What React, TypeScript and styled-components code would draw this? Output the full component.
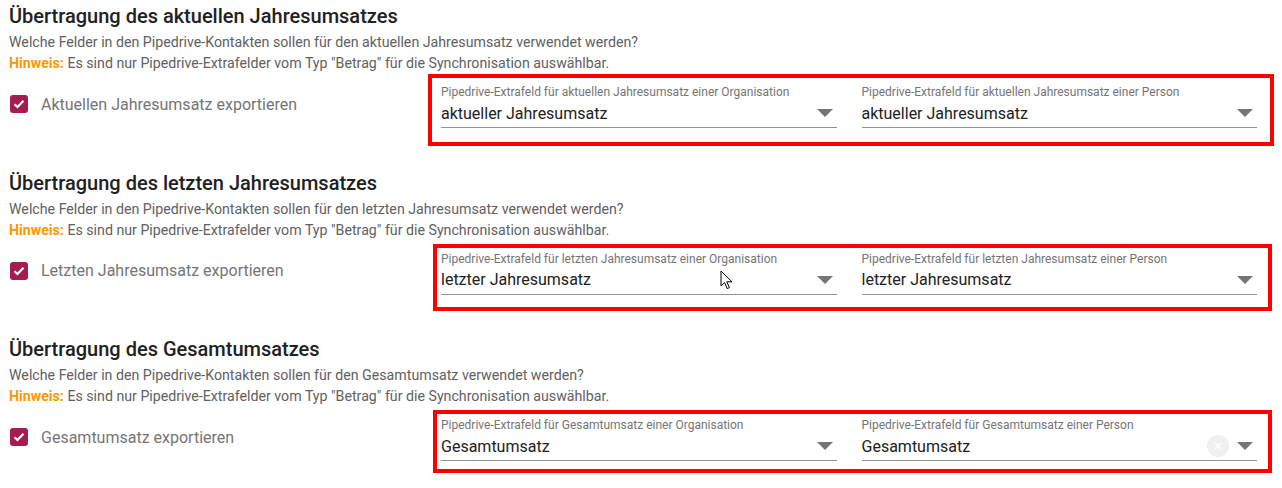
import styled, { createGlobalStyle } from 'styled-components'

const GlobalStyle = createGlobalStyle`
  body {
    margin: 0;
    background: #fff;
    font-family: Roboto, 'Noto Sans', sans-serif;
  }
`

const Page = styled.div`
  padding: 4px 25px 30px 9px;
  display: flex;
  flex-direction: column;
  gap: 42.5px;
`

const Section = styled.section`
  display: flex;
  flex-direction: column;
`

const Heading = styled.h2`
  margin: 0 0 4px;
  font-size: 20px;
  line-height: 24px;
  font-weight: 500;
  color: #212121;
`

const Hint = styled.p`
  margin: 0;
  font-size: 14.2px;
  line-height: 21px;
  color: #616161;

  b {
    color: #ff9800;
    font-weight: 700;
  }
`

const Row = styled.div`
  display: grid;
  grid-template-columns: 432px 1fr;
  margin-top: 11px;
`

const CheckLabel = styled.label`
  display: flex;
  align-items: center;
  gap: 13px;
  height: 24px;
  margin-top: 7px;
  padding-left: 1px;
  font-size: 16px;
  color: #757575;
`

const Box = styled.span`
  width: 18px;
  height: 18px;
  border-radius: 3px;
  background: #a61b50;
  display: flex;
  align-items: center;
  justify-content: center;
`

const Fields = styled.div<{ $t: number; $r: number; $b: number; $l: number }>`
  position: relative;
  display: grid;
  grid-template-columns: 1fr 1fr;
  gap: 25px;

  &::before {
    content: '';
    position: absolute;
    top: ${p => p.$t}px;
    right: ${p => p.$r}px;
    bottom: ${p => p.$b}px;
    left: ${p => p.$l}px;
    border: 4px solid #ff0000;
    pointer-events: none;
  }
`

const Field = styled.div`
  position: relative;
  display: flex;
  flex-direction: column;
`

const FieldLabel = styled.span`
  font-size: 12px;
  line-height: 14px;
  color: #757575;
`

const Select = styled.div`
  display: flex;
  align-items: center;
  height: 28px;
  border-bottom: 1px solid #949494;
  font-size: 16px;
  color: #212121;
`

const Value = styled.span`
  flex: 1;
`

const Clear = styled.span`
  width: 22px;
  height: 22px;
  margin-right: 8px;
  border-radius: 50%;
  background: #f0f0f0;
  display: flex;
  align-items: center;
  justify-content: center;
`

const Arrow = styled.span`
  width: 0;
  height: 0;
  margin-right: 4px;
  border-left: 8px solid transparent;
  border-right: 8px solid transparent;
  border-top: 8px solid #757575;
`

const Cursor = styled.svg`
  position: absolute;
  left: 279px;
  top: 18px;
`

type Box = [number, number, number, number]

const sections: {
  title: string
  what: string
  check: string
  org: string
  person: string
  value: string
  box: Box
  clear?: boolean
  cursor?: boolean
}[] = [
  {
    title: 'Übertragung des aktuellen Jahresumsatzes',
    what: 'aktuellen Jahresumsatz',
    check: 'Aktuellen Jahresumsatz exportieren',
    org: 'Pipedrive-Extrafeld für aktuellen Jahresumsatz einer Organisation',
    person: 'Pipedrive-Extrafeld für aktuellen Jahresumsatz einer Person',
    value: 'aktueller Jahresumsatz',
    box: [-11, -17, -18, -13],
  },
  {
    title: 'Übertragung des letzten Jahresumsatzes',
    what: 'letzten Jahresumsatz',
    check: 'Letzten Jahresumsatz exportieren',
    org: 'Pipedrive-Extrafeld für letzten Jahresumsatz einer Organisation',
    person: 'Pipedrive-Extrafeld für letzten Jahresumsatz einer Person',
    value: 'letzter Jahresumsatz',
    box: [-8, -15, -16, -8],
    cursor: true,
  },
  {
    title: 'Übertragung des Gesamtumsatzes',
    what: 'Gesamtumsatz',
    check: 'Gesamtumsatz exportieren',
    org: 'Pipedrive-Extrafeld für Gesamtumsatz einer Organisation',
    person: 'Pipedrive-Extrafeld für Gesamtumsatz einer Person',
    value: 'Gesamtumsatz',
    box: [-8, -15, -12, -8],
    clear: true,
  },
]

const Check = () => (
  <Box>
    <svg width="12" height="10" viewBox="0 0 12 10">
      <path d="M1.5 5.2 4.5 8 10.5 1.8" fill="none" stroke="#fff" strokeWidth="2.2" />
    </svg>
  </Box>
)

export default function App() {
  return (
    <>
      <GlobalStyle />
      <Page>
        {sections.map(s => (
          <Section key={s.title}>
            <Heading>{s.title}</Heading>
            <Hint>Welche Felder in den Pipedrive-Kontakten sollen für den {s.what} verwendet werden?</Hint>
            <Hint>
              <b>Hinweis:</b> Es sind nur Pipedrive-Extrafelder vom Typ "Betrag" für die Synchronisation auswählbar.
            </Hint>
            <Row>
              <CheckLabel>
                <Check />
                {s.check}
              </CheckLabel>
              <Fields $t={s.box[0]} $r={s.box[1]} $b={s.box[2]} $l={s.box[3]}>
                <Field>
                  <FieldLabel>{s.org}</FieldLabel>
                  <Select>
                    <Value>{s.value}</Value>
                    <Arrow />
                  </Select>
                  {s.cursor && (
                    <Cursor width="13" height="20" viewBox="0 0 13 20">
                      <path d="M1 1v15l3.6-3.4 2.6 6 2.2-1-2.6-5.8H12z" fill="#fff" stroke="#000" strokeWidth="1" />
                    </Cursor>
                  )}
                </Field>
                <Field>
                  <FieldLabel>{s.person}</FieldLabel>
                  <Select>
                    <Value>{s.value}</Value>
                    {s.clear && (
                      <Clear>
                        <svg width="8" height="8" viewBox="0 0 8 8">
                          <path d="M1 1l6 6M7 1 1 7" stroke="#fff" strokeWidth="1.6" />
                        </svg>
                      </Clear>
                    )}
                    <Arrow />
                  </Select>
                </Field>
              </Fields>
            </Row>
          </Section>
        ))}
      </Page>
    </>
  )
}
